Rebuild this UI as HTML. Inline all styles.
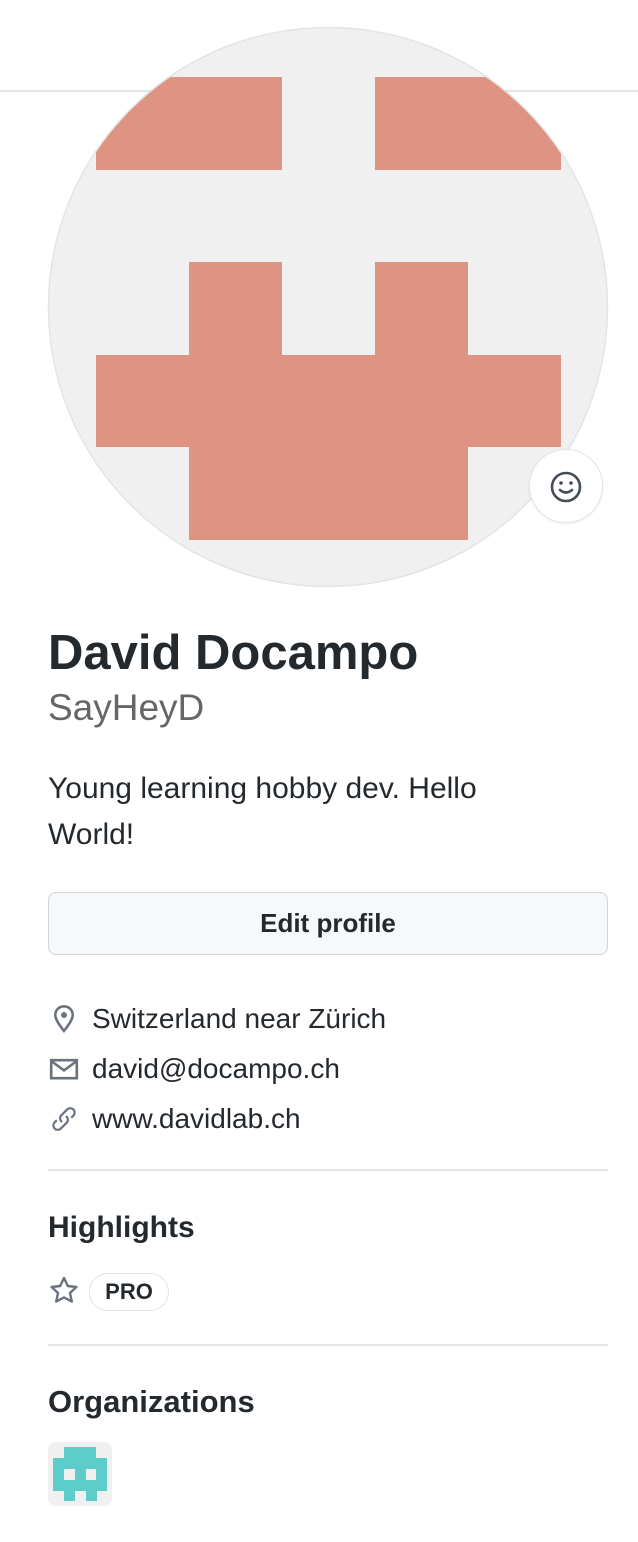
<!DOCTYPE html>
<html><head><meta charset="utf-8"><style>
body{margin:0;width:638px;height:1542px;background:#fff;font-family:"Liberation Sans",sans-serif;color:#24292e;position:relative;overflow:hidden}
.a{position:absolute}
.hl{position:absolute;left:48px;width:560px;height:2px;background:#e1e4e8}
.row{position:absolute;left:48px;font-size:28px;color:#24292e;display:flex;align-items:center;line-height:34px}
.row svg{width:32px;height:32px;margin-right:12px}
</style></head><body>
<div class="a" style="left:0;top:90px;width:638px;height:2px;background:#e1e4e8"></div>
<svg class="a" style="left:47px;top:27px" width="562" height="562" viewBox="47 27 562 562">
<defs><clipPath id="c"><circle cx="328" cy="307" r="279"/></clipPath></defs>
<circle cx="328" cy="307" r="279" fill="#f0f0f0"/>
<g clip-path="url(#c)" fill="#df9382">
<rect x="96" y="77" width="186" height="93"/>
<rect x="375" y="77" width="186" height="93"/>
<rect x="189" y="262" width="93" height="93"/>
<rect x="375" y="262" width="93" height="93"/>
<rect x="96" y="355" width="465" height="92"/>
<rect x="189" y="447" width="279" height="93"/>
</g>
<circle cx="328" cy="307" r="279.5" fill="none" stroke="#e1e4e8" stroke-width="1.5"/>
</svg>
<div class="a" style="left:529px;top:449px;width:72px;height:72px;border-radius:50%;background:#fff;border:1px solid #e1e4e8;box-shadow:0 1px 2px rgba(0,0,0,.08)">
<svg width="72" height="72" viewBox="0 0 72 72"><circle cx="36" cy="37" r="14" fill="none" stroke="#444d56" stroke-width="2.6"/><circle cx="31" cy="33" r="1.8" fill="#444d56"/><circle cx="41" cy="33" r="1.8" fill="#444d56"/><path d="M30 40q6 5 12 0" fill="none" stroke="#444d56" stroke-width="2.6" stroke-linecap="round"/></svg></div>
<div class="a" style="left:48px;top:622px;font-size:49px;font-weight:bold;line-height:62px">David Docampo</div>
<div class="a" style="left:48px;top:684px;font-size:37px;color:#666;line-height:48px">SayHeyD</div>
<div class="a" style="left:48px;top:766px;font-size:30px;line-height:46px;width:480px">Young learning hobby dev. Hello World!</div>
<div class="a" style="left:48px;top:892px;width:558px;height:61px;border:1px solid #d1d5da;border-radius:8px;background:#f6f8fa;text-align:center;line-height:61px;font-size:26px;font-weight:bold">Edit profile</div>
<div class="row" style="top:1002px"><svg viewBox="0 0 16 16"><path fill="#6a737d" d="M8 1a5 5 0 0 0-5 5c0 3 3.5 7 5 9 1.5-2 5-6 5-9a5 5 0 0 0-5-5zm0 1.3A3.7 3.7 0 0 1 11.7 6c0 2-2.3 5-3.7 7-1.4-2-3.7-5-3.7-7A3.7 3.7 0 0 1 8 2.3zM8 4.5a1.5 1.5 0 1 0 0 3 1.5 1.5 0 0 0 0-3z"/></svg>Switzerland near Zürich</div>
<div class="row" style="top:1052px"><svg viewBox="0 0 16 16"><path fill="none" stroke="#6a737d" stroke-width="1.3" d="M1.6 3.6h12.8v9H1.6zM1.6 4l6.4 4.7L14.4 4"/></svg>david@docampo.ch</div>
<div class="row" style="top:1102px"><svg viewBox="0 0 16 16"><path fill="none" stroke="#6a737d" stroke-width="1.1" d="M7 9.5l-.3-.3a2.2 2.2 0 0 1 0-3.1l3-3a2.2 2.2 0 0 1 3.1 3.1L11.6 7.4M9 6.5l.3.3a2.2 2.2 0 0 1 0 3.1l-3 3a2.2 2.2 0 0 1-3.1-3.1L4.4 8.6"/></svg>www.davidlab.ch</div>
<div class="hl" style="top:1169px"></div>
<div class="a" style="left:48px;top:1210px;font-size:30px;font-weight:bold;line-height:36px">Highlights</div>
<svg class="a" style="left:48px;top:1275px" width="32" height="32" viewBox="0 0 16 16"><path fill="none" stroke="#6a737d" stroke-width="1.2" stroke-linejoin="round" d="M8 1.5l1.9 4 4.3.5-3.2 3 .9 4.3L8 11.2l-3.9 2.1.9-4.3-3.2-3 4.3-.5z"/></svg>
<div class="a" style="left:89px;top:1273px;width:78px;height:36px;border:1.5px solid #e1e4e8;border-radius:19px;text-align:center;line-height:36px;font-size:22px;font-weight:bold">PRO</div>
<div class="hl" style="top:1344px"></div>
<div class="a" style="left:48px;top:1384px;font-size:31px;font-weight:bold;line-height:36px">Organizations</div>
<svg class="a" style="left:48px;top:1442px" width="64" height="64" viewBox="0 0 64 64"><rect width="64" height="64" rx="8" fill="#f0f0f0"/><g fill="#5ccdc9"><rect x="16" y="5" width="32" height="11"/><rect x="5" y="16" width="54" height="11"/><rect x="5" y="27" width="11" height="11"/><rect x="27" y="27" width="11" height="11"/><rect x="48" y="27" width="11" height="11"/><rect x="5" y="38" width="54" height="11"/><rect x="16" y="49" width="11" height="10"/><rect x="38" y="49" width="11" height="10"/></g></svg>
</body></html>
